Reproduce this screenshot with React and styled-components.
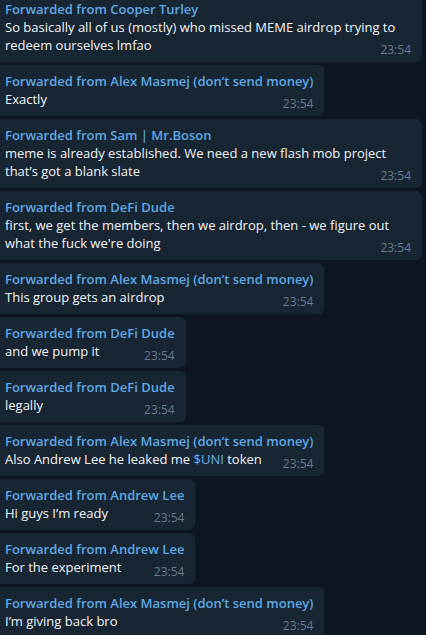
import React from "react";
import styled, { createGlobalStyle } from "styled-components";

const GlobalStyle = createGlobalStyle`
  html, body {
    margin: 0;
    padding: 0;
    background: #0e1621;
  }
  body {
    font-family: "Open Sans", "Noto Sans", sans-serif;
    -webkit-font-smoothing: antialiased;
  }
`;

const Chat = styled.div`
  height: 100vh;
  overflow: hidden;
  background: #0e1621;
`;

const List = styled.div`
  display: flex;
  flex-direction: column;
  align-items: flex-start;
  gap: 3px;
  margin-top: -7px;
  padding-right: 4px;
`;

const Bubble = styled.div`
  max-width: 422px;
  box-sizing: border-box;
  background: #182533;
  border-radius: 0 6px 6px 0;
  padding: 7px 11px 8px 5px;
  flex-shrink: 0;
`;

const Forward = styled.div`
  color: #5ea8e4;
  font-size: 13px;
  font-weight: 600;
  line-height: 18px;
  white-space: nowrap;
`;

const Text = styled.div`
  color: #f2f4f6;
  font-size: 13px;
  line-height: 18px;
  display: flow-root;
`;

const Time = styled.span`
  float: right;
  color: #6a7b8c;
  font-size: 12px;
  line-height: 18px;
  margin: 5px 0 -5px 14px;
`;

const Cashtag = styled.span`
  color: #6ab2f2;
`;

const ALEX = "Alex Masmej (don’t send money)";

const messages = [
  {
    from: "Cooper Turley",
    text: "So basically all of us (mostly) who missed MEME airdrop trying to redeem ourselves lmfao",
  },
  { from: ALEX, text: "Exactly" },
  {
    from: "Sam | Mr.Boson",
    text: "meme is already established. We need a new flash mob project that’s got a blank slate",
  },
  {
    from: "DeFi Dude",
    text: "first, we get the members, then we airdrop, then - we figure out what the fuck we're doing",
  },
  { from: ALEX, text: "This group gets an airdrop" },
  { from: "DeFi Dude", text: "and we pump it" },
  { from: "DeFi Dude", text: "legally" },
  {
    from: ALEX,
    text: (
      <>
        Also Andrew Lee he leaked me <Cashtag>$UNI</Cashtag> token
      </>
    ),
  },
  { from: "Andrew Lee", text: "Hi guys I’m ready" },
  { from: "Andrew Lee", text: "For the experiment" },
  { from: ALEX, text: "I’m giving back bro" },
];

const App = () => {
  return (
    <>
      <GlobalStyle />
      <Chat>
        <List>
          {messages.map((m, i) => (
            <Bubble key={i}>
              <Forward>Forwarded from {m.from}</Forward>
              <Text>
                {m.text}
                <Time>23:54</Time>
              </Text>
            </Bubble>
          ))}
        </List>
      </Chat>
    </>
  );
};

export default App;
